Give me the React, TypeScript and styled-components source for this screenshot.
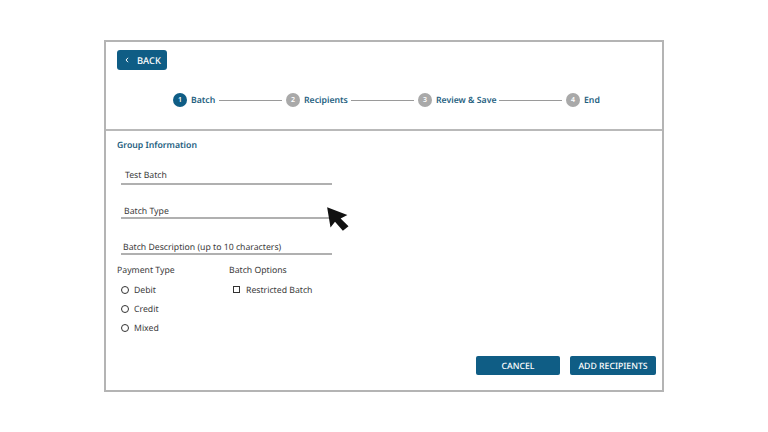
import React from "react";
import styled, { createGlobalStyle } from "styled-components";

const GlobalStyle = createGlobalStyle`
  html, body {
    margin: 0;
    padding: 0;
    background: #fff;
  }
  * {
    box-sizing: border-box;
  }
`;

const Page = styled.div`
  width: 768px;
  height: 432px;
  padding: 40px 104px;
  font-family: "Noto Sans", sans-serif;
  text-rendering: geometricPrecision;
  color: #333;
`;

const Frame = styled.div`
  width: 560px;
  height: 352px;
  border: 2px solid #b4b4b4;
  display: flex;
  flex-direction: column;
`;

const Header = styled.div`
  height: 89px;
  padding: 8px 11px 0;
  border-bottom: 2px solid #b9b9b9;
`;

const BackButton = styled.button`
  width: 50px;
  height: 20px;
  padding: 0 0 0 8px;
  border: 0;
  border-radius: 3px;
  background: #0f5d85;
  color: #fff;
  font: 500 9.3px "Noto Sans", sans-serif;
  text-rendering: geometricPrecision;
  display: flex;
  align-items: center;
  gap: 8px;
`;

const Stepper = styled.div`
  margin: 21px 0 0 56px;
  display: flex;
  align-items: center;
  height: 18px;
`;

const Dot = styled.span<{ $active?: boolean }>`
  width: 14px;
  height: 14px;
  border-radius: 50%;
  background: ${(p) => (p.$active ? "#0f5d85" : "#a9a9a9")};
  color: #fff;
  font-size: 7px;
  font-weight: 600;
  display: flex;
  align-items: center;
  justify-content: center;
  flex: none;
`;

const StepLabel = styled.span<{ $width: number }>`
  width: ${(p) => p.$width}px;
  margin-left: 4px;
  font-size: 8.7px;
  font-weight: 600;
  color: #1f5f7f;
  white-space: nowrap;
`;

const StepLine = styled.span`
  width: 63px;
  height: 1px;
  background: #9a9a9a;
  margin: 0 4px;
  flex: none;
`;

const Body = styled.div`
  flex: 1;
  padding: 8px 6px 0 11px;
  display: flex;
  flex-direction: column;
`;

const SectionTitle = styled.div`
  font-size: 8.7px;
  font-weight: 600;
  color: #1f5f7f;
  line-height: 13px;
  margin-bottom: 11px;
`;

const Field = styled.div<{ $indent: number; $height: number; $drop: number }>`
  width: 211px;
  height: ${(p) => p.$height}px;
  margin-left: 4px;
  padding-left: ${(p) => p.$indent}px;
  padding-bottom: ${(p) => p.$drop}px;
  border-bottom: 2px solid #b0b0b0;
  font-size: 8.7px;
  color: #3a3a3a;
  display: flex;
  align-items: flex-end;
  line-height: 9px;
  position: relative;
`;

const Cursor = styled.svg`
  position: absolute;
  left: 205px;
  top: 21px;
`;

const Options = styled.div`
  margin-top: 9px;
  display: flex;
`;

const OptionGroup = styled.div<{ $width?: number }>`
  width: ${(p) => (p.$width ? `${p.$width}px` : "auto")};
`;

const GroupLabel = styled.div`
  font-size: 8.7px;
  line-height: 13px;
  color: #3a3a3a;
  margin-bottom: 3px;
`;

const Option = styled.div`
  height: 19px;
  padding-left: 4px;
  display: flex;
  align-items: center;
  gap: 5px;
  font-size: 8.7px;
  color: #3a3a3a;
`;

const Radio = styled.span`
  width: 8px;
  height: 8px;
  border: 1.3px solid #333;
  border-radius: 50%;
  flex: none;
`;

const Check = styled.span`
  width: 7px;
  height: 7px;
  border: 1.2px solid #333;
  flex: none;
  margin-right: 1px;
`;

const Footer = styled.div`
  margin-top: auto;
  margin-bottom: 15px;
  display: flex;
  justify-content: flex-end;
  gap: 10px;
`;

const ActionButton = styled.button<{ $width: number }>`
  width: ${(p) => p.$width}px;
  height: 19px;
  padding: 0;
  border: 0;
  border-radius: 2px;
  background: #0f5d85;
  color: #fff;
  font: 500 8.7px "Noto Sans", sans-serif;
  text-rendering: geometricPrecision;
`;

const steps = [
  { label: "Batch", width: 24 },
  { label: "Recipients", width: 43 },
  { label: "Review & Save", width: 59 },
  { label: "End", width: 16 },
];

export default function App() {
  return (
    <Page>
      <GlobalStyle />
      <Frame>
        <Header>
          <BackButton>
            <svg width="4" height="6" viewBox="0 0 4 6">
              <path d="M3 .8 1 3l2 2.2" fill="none" stroke="#fff" strokeWidth="1" />
            </svg>
            BACK
          </BackButton>
          <Stepper>
            {steps.map((s, i) => (
              <React.Fragment key={s.label}>
                <Dot $active={i === 0}>{i + 1}</Dot>
                <StepLabel $width={s.width}>{s.label}</StepLabel>
                {i < steps.length - 1 && <StepLine />}
              </React.Fragment>
            ))}
          </Stepper>
        </Header>
        <Body>
          <SectionTitle>Group Information</SectionTitle>
          <Field $indent={4} $height={22} $drop={3}>Test Batch</Field>
          <Field $indent={3} $height={34} $drop={1}>
            Batch Type
            <Cursor width="27" height="27" viewBox="0 0 24 24">
              <path d="M1 1 L4 19 L8 14 L15 22 L20 18 L13 11 L19 8 Z" fill="#111" />
            </Cursor>
          </Field>
          <Field $indent={2} $height={36} $drop={1}>Batch Description (up to 10 characters)</Field>
          <Options>
            <OptionGroup $width={112}>
              <GroupLabel>Payment Type</GroupLabel>
              <Option><Radio />Debit</Option>
              <Option><Radio />Credit</Option>
              <Option><Radio />Mixed</Option>
            </OptionGroup>
            <OptionGroup>
              <GroupLabel>Batch Options</GroupLabel>
              <Option><Check />Restricted Batch</Option>
            </OptionGroup>
          </Options>
          <Footer>
            <ActionButton $width={84}>CANCEL</ActionButton>
            <ActionButton $width={86}>ADD RECIPIENTS</ActionButton>
          </Footer>
        </Body>
      </Frame>
    </Page>
  );
}
